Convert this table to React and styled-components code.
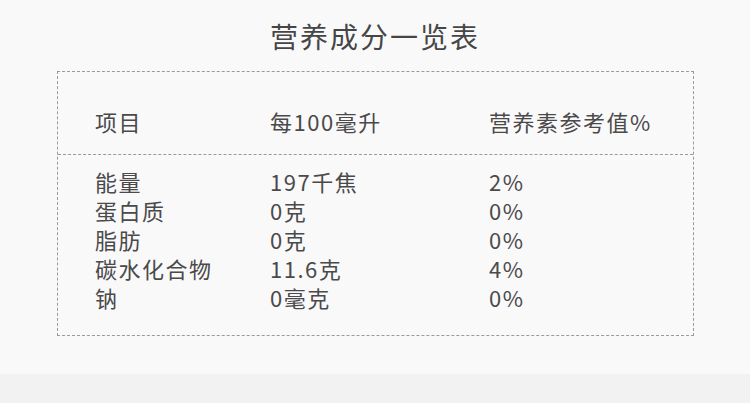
import React from "react";
import styled, { createGlobalStyle } from "styled-components";

const GlobalStyle = createGlobalStyle`
  html, body {
    margin: 0;
    padding: 0;
    background: #f3f2f3;
  }
  body {
    font-family: "Noto Sans CJK SC", "Noto Sans", sans-serif;
    color: #4a4a4a;
  }
`;

const Page = styled.div`
  height: 374px;
  background: #faf9fa;
  padding-top: 16px;
  box-sizing: border-box;
`;

const Title = styled.h1`
  margin: 0;
  font-size: 28px;
  font-weight: 400;
  line-height: 40px;
  letter-spacing: 2px;
  text-align: center;
  color: #464646;
`;

const Table = styled.div`
  margin: 15px 0 0 57px;
  width: 637px;
  height: 265px;
  box-sizing: border-box;
  border: 1px dashed #9a9a9a;
`;

const Row = styled.div`
  display: grid;
  grid-template-columns: 175px 219px 1fr;
  padding-left: 37px;
  font-size: 22px;
  line-height: 29px;
  letter-spacing: 1.5px;
`;

const Head = styled(Row)`
  padding-top: 35px;
  padding-bottom: 18px;
  border-bottom: 1px dashed #9a9a9a;
`;

const Body = styled.div`
  padding-top: 12px;
`;

const rows = [
  ["能量", "197千焦", "2%"],
  ["蛋白质", "0克", "0%"],
  ["脂肪", "0克", "0%"],
  ["碳水化合物", "11.6克", "4%"],
  ["钠", "0毫克", "0%"],
];

export default function App() {
  return (
    <>
      <GlobalStyle />
      <Page>
        <Title>营养成分一览表</Title>
        <Table>
          <Head>
            <span>项目</span>
            <span>每100毫升</span>
            <span>营养素参考值%</span>
          </Head>
          <Body>
            {rows.map((r, i) => (
              <Row key={i}>
                <span>{r[0]}</span>
                <span>{r[1]}</span>
                <span>{r[2]}</span>
              </Row>
            ))}
          </Body>
        </Table>
      </Page>
    </>
  );
}
